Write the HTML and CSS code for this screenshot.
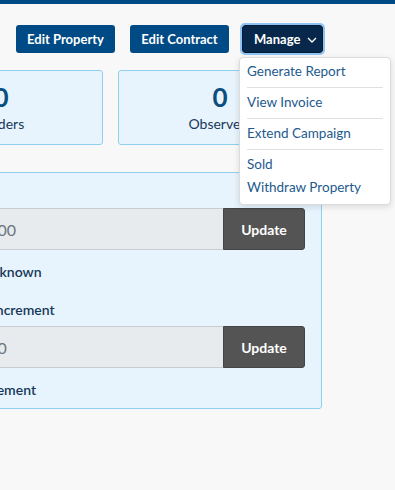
FILE: index.html
```html
<!DOCTYPE html>
<html>
<head>
<meta charset="utf-8">
<link rel="stylesheet" href="styles.css">
</head>
<body>
<div class="topbar"></div>
<div class="toolbar">
  <button class="btn btn-primary">Edit Property</button>
  <button class="btn btn-primary">Edit Contract</button>
  <div class="manage-wrap">
    <button class="btn btn-manage">Manage
      <svg class="chev" width="10" height="6" viewBox="0 0 10 6"><path d="M1 1l4 4 4-4" fill="none" stroke="#fff" stroke-width="1.3"/></svg>
    </button>
    <div class="menu">
      <div class="menu-item">Generate Report</div>
      <div class="menu-sep"></div>
      <div class="menu-item">View Invoice</div>
      <div class="menu-sep"></div>
      <div class="menu-item">Extend Campaign</div>
      <div class="menu-sep"></div>
      <div class="menu-item">Sold</div>
      <div class="menu-item">Withdraw Property</div>
    </div>
  </div>
</div>
<div class="stats">
  <div class="stat"><div class="stat-num">0</div><div class="stat-label">Bidders</div></div>
  <div class="stat"><div class="stat-num">0</div><div class="stat-label">Observers</div></div>
</div>
<div class="panel">
  <div class="field-label">Reserve</div>
  <div class="input-group">
    <input class="input" value="$100">
    <button class="btn-update">Update</button>
  </div>
  <div class="field-note">Reserve price: not known</div>
  <div class="field-label second">Set minimum bid increment</div>
  <div class="input-group">
    <input class="input" value="$10">
    <button class="btn-update">Update</button>
  </div>
  <div class="field-note">Any minimum increment</div>
</div>
</body>
</html>
```
FILE: styles.css
```css
* { box-sizing: border-box; }
html, body { margin: 0; padding: 0; }
body {
  width: 395px;
  height: 490px;
  overflow: hidden;
  background: #f8f8f8;
  font-family: Lato, "Noto Sans", sans-serif;
  color: #17385a;
}
.topbar {
  height: 4px;
  background: #004b85;
}
.toolbar {
  display: flex;
  align-items: flex-start;
  padding: 21px 0 0 16px;
  height: 53px;
}
.btn {
  height: 28px;
  border: none;
  border-radius: 3px;
  font-family: Lato, sans-serif;
  font-weight: 700;
  font-size: 13px;
  color: #fff;
  padding: 0;
  white-space: nowrap;
  cursor: pointer;
}
.btn-primary {
  background: #004b85;
  width: 99px;
  margin-right: 15px;
}
.btn-primary + .btn-primary { margin-right: 13px; }
.manage-wrap {
  position: relative;
}
.btn-manage {
  background: #07284a;
  width: 81px;
  display: flex;
  align-items: center;
  gap: 7px;
  padding: 0 0 0 11px;
  outline: 2px solid #8ec4f5;
  outline-offset: 0;
  border: 1px solid #041a30;
}
.chev { margin-top: 1px; }
.menu {
  position: absolute;
  top: 32px;
  left: -3px;
  width: 152px;
  height: 148px;
  background: #fff;
  border: 1px solid #dcdcdc;
  border-radius: 4px;
  box-shadow: 0 2px 6px rgba(0,0,0,0.12);
  padding: 2px 7px 0 7px;
  z-index: 5;
}
.menu-item {
  font-size: 13.5px;
  color: #1d5a8e;
  height: 23px;
  line-height: 23px;
  white-space: nowrap;
}
.menu-sep {
  height: 1px;
  background: #e0e0e0;
  margin: 4px 0 3px 0;
}
.stats {
  display: flex;
  gap: 15px;
  margin-left: -101px;
  margin-top: 13px;
}
.stat {
  width: 204px;
  height: 75px;
  background: #e8f4fd;
  border: 1px solid #8ed0ee;
  border-radius: 3px;
  text-align: center;
  padding-top: 13px;
}
.stat-num {
  font-size: 26px;
  font-weight: 700;
  color: #0a4f80;
  line-height: 26px;
}
.stat-label {
  font-size: 14px;
  color: #17385a;
  line-height: 20px;
  margin-top: 4px;
}
.panel {
  margin-top: 27px;
  margin-left: -132px;
  width: 454px;
  height: 237px;
  background: #e8f4fd;
  border: 1px solid #8ed0ee;
  border-radius: 3px;
  padding: 10px 16px 0 16px;
}
.field-label {
  font-size: 14px;
  font-weight: 600;
  color: #17385a;
  height: 25px;
  line-height: 18px;
  white-space: nowrap;
}
.field-label.second { margin-top: 20px; }
.input-group {
  display: flex;
  height: 42px;
}
.input {
  flex: 1;
  min-width: 0;
  border: 1px solid #c8ccd0;
  border-right: none;
  background: #e8ebee;
  font-family: Lato, sans-serif;
  font-size: 16px;
  color: #6c757d;
  padding: 0 12px 0 93px;
  border-radius: 3px 0 0 3px;
}
.btn-update {
  width: 82px;
  border: 1px solid #444;
  background: #545454;
  color: #fff;
  font-family: Lato, sans-serif;
  font-weight: 700;
  font-size: 14px;
  border-radius: 0 3px 3px 0;
}
.field-note {
  font-size: 14px;
  font-weight: 600;
  color: #17385a;
  margin-top: 13px;
  line-height: 18px;
  white-space: nowrap;
}
```
